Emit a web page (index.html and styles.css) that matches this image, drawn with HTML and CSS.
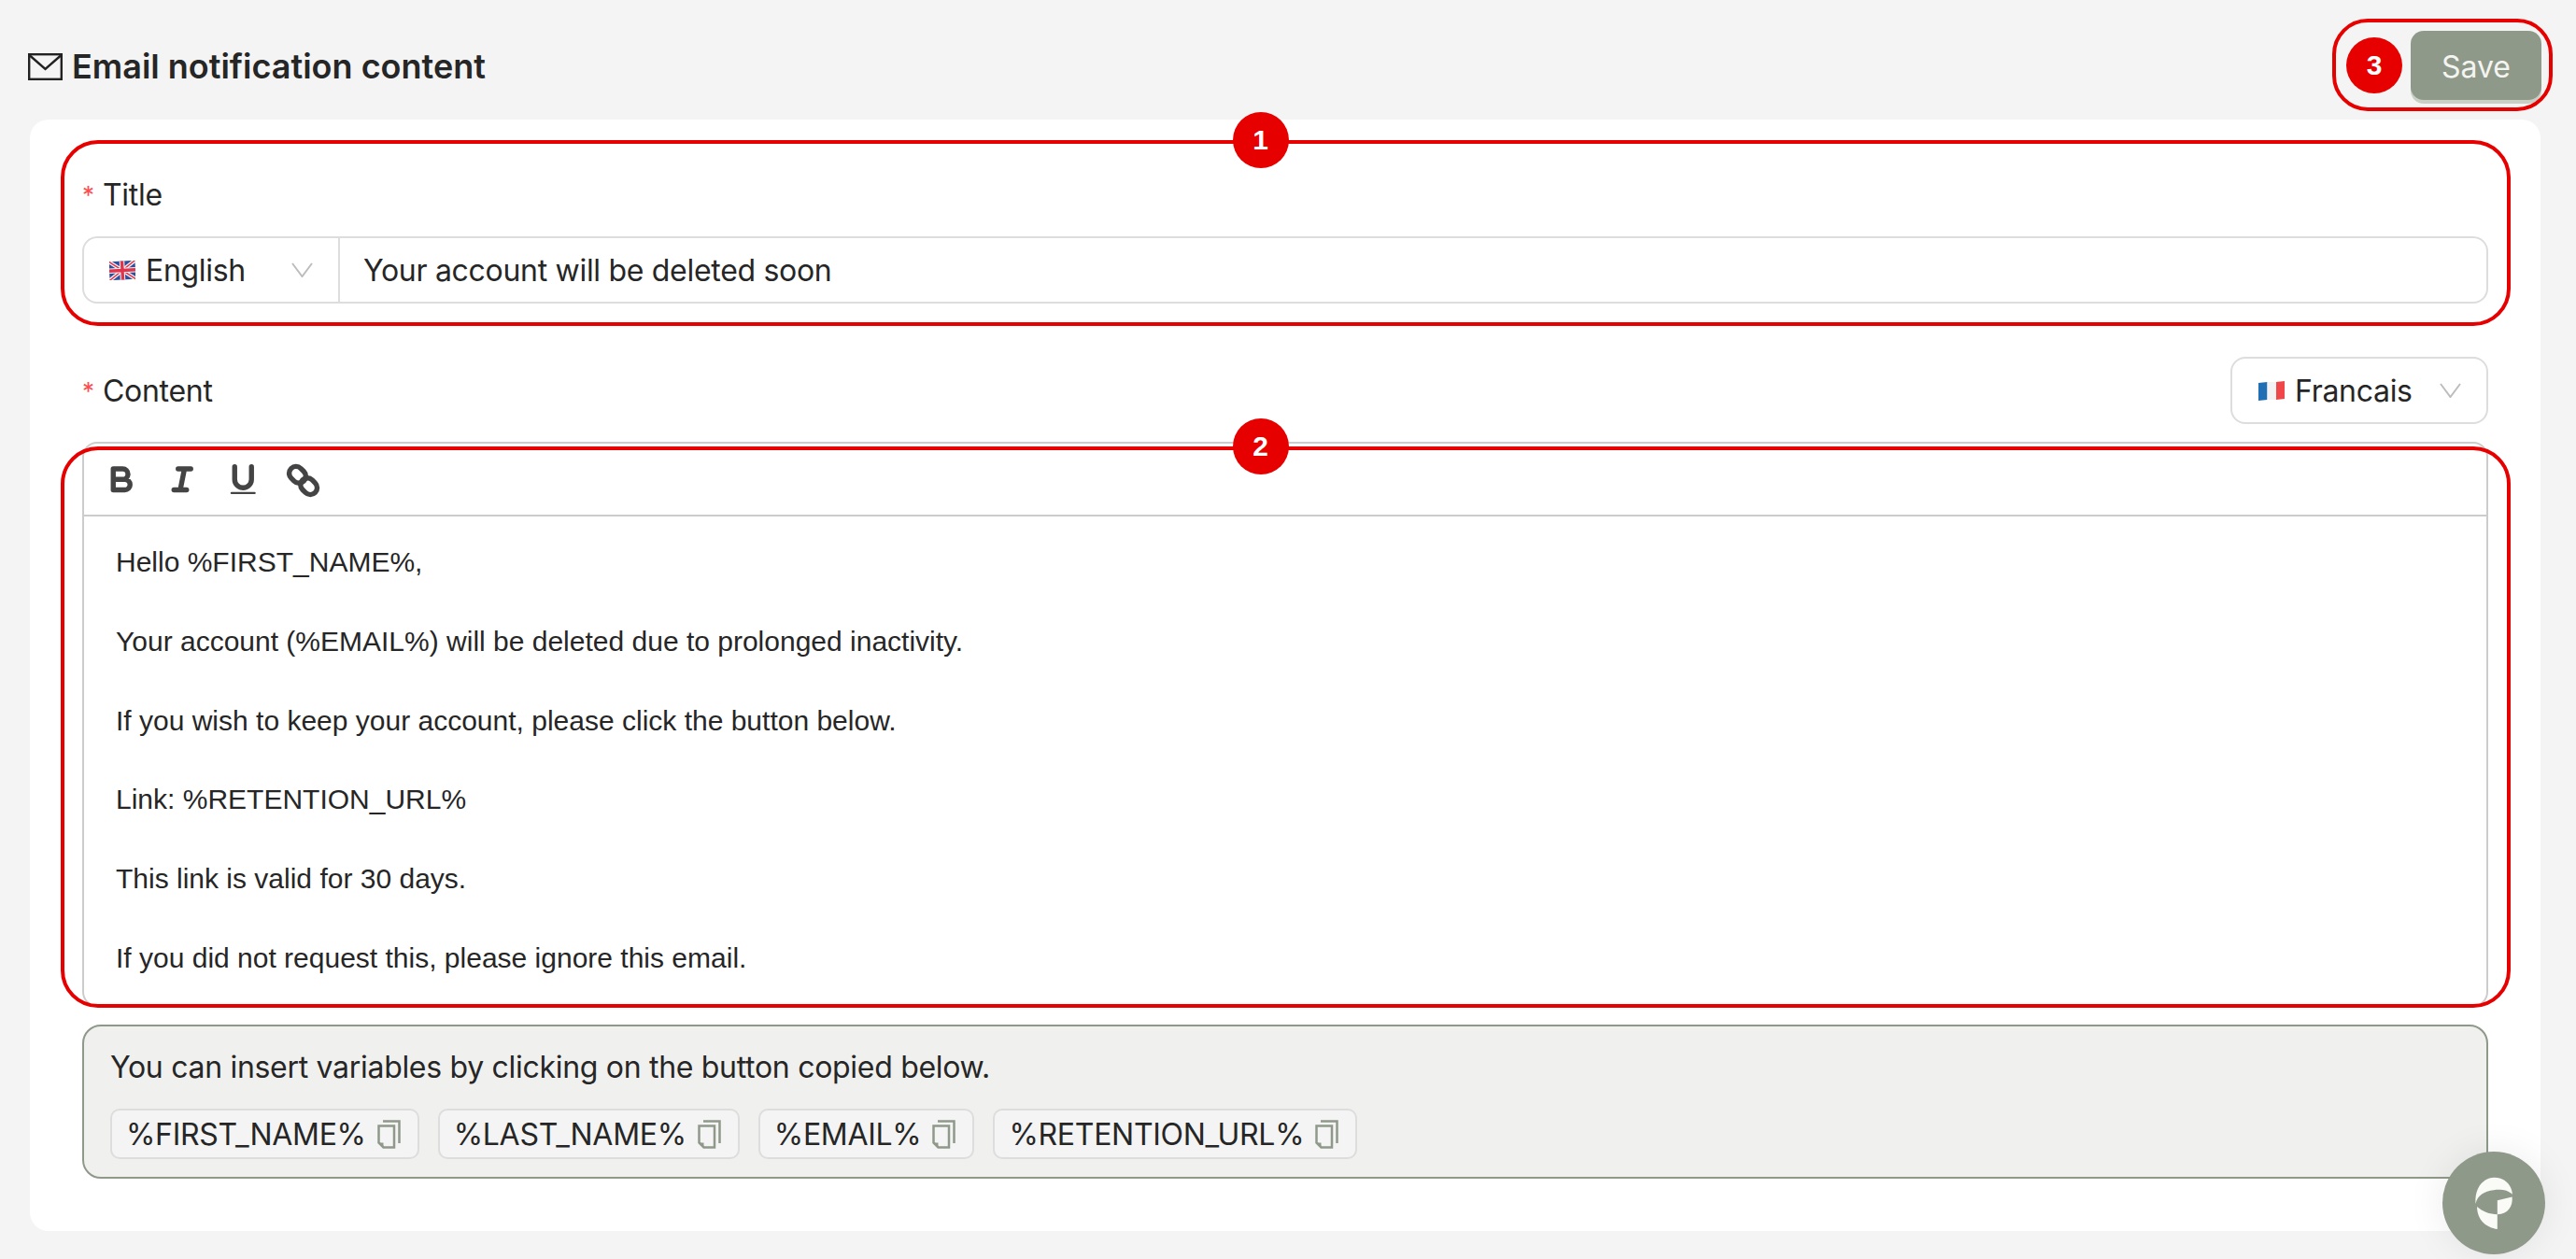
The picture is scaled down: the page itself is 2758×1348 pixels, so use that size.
FILE: index.html
```html
<!DOCTYPE html>
<html lang="en">
<head>
<meta charset="utf-8">
<title>Email notification content</title>
<link rel="stylesheet" href="styles.css">
</head>
<body>
<div class="page">
  <header class="topbar">
    <h1 class="heading">
      <svg class="mail-icon" viewBox="0 0 37 29" aria-hidden="true"><rect x="1.2" y="1.2" width="34.6" height="26.6" fill="none" stroke="#222" stroke-width="2.4"/><path d="M2 2.500 18.500 17 35 2.500" fill="none" stroke="#222" stroke-width="2.400"/></svg>
      <span>Email notification content</span>
    </h1>
    <div class="save-wrap">
      <span class="badge">3</span>
      <button class="save">Save</button>
      <span class="hl hl-save"></span>
    </div>
  </header>

  <main class="card">
    <section class="title-field">
      <div class="label"><span class="req">*</span>Title</div>
      <div class="input-group">
        <div class="lang lang-en">
          <svg class="flag" viewBox="0 0 28 21" aria-hidden="true"><g transform="rotate(-3 14 10.500)"><rect y=".5" width="28" height="20" rx="1.500" fill="#2f4f9e"/><path d="M0 .5 28 20.500M28 .5 0 20.500" stroke="#f2f2f2" stroke-width="4"/><path d="M0 .5 28 20.500M28 .5 0 20.500" stroke="#e0344c" stroke-width="1.500"/><path d="M14 .5V20.500M0 10.500H28" stroke="#f2f2f2" stroke-width="5.500"/><path d="M14 .5V20.500M0 10.500H28" stroke="#e0344c" stroke-width="3.400"/></g></svg>
          <span class="lang-name">English</span>
          <svg class="chev" viewBox="0 0 23 16" aria-hidden="true"><path d="M1 1 11.500 15 22 1" fill="none" stroke="#bdbdbd" stroke-width="2"/></svg>
        </div>
        <div class="input-value">Your account will be deleted soon</div>
      </div>
      <span class="hl hl-title"><span class="badge badge-top">1</span></span>
    </section>

    <section class="content-head">
      <div class="label"><span class="req">*</span>Content</div>
      <div class="lang lang-fr">
        <svg class="flag" viewBox="0 0 28 21" aria-hidden="true"><path d="M0 2 9.500 1V20L0 21Z" fill="#1f6fb5"/><path d="M9.500 1H19V20H9.500Z" fill="#f3f3f3"/><path d="M19 1 28 0V19L19 20Z" fill="#f0474a"/></svg>
        <span class="lang-name">Francais</span>
        <svg class="chev" viewBox="0 0 23 16" aria-hidden="true"><path d="M1 1 11.500 15 22 1" fill="none" stroke="#bdbdbd" stroke-width="2"/></svg>
      </div>
    </section>

    <section class="editor">
      <div class="toolbar">
        <svg class="tool" viewBox="0 0 18 18" aria-hidden="true"><path class="tool-stroke" d="M5 4H9.500A2.500 2.500 0 0 1 12 6.500 2.500 2.500 0 0 1 9.500 9H5ZM5 9H10.500A2.500 2.500 0 0 1 13 11.500 2.500 2.500 0 0 1 10.500 14H5Z"/></svg>
        <svg class="tool" viewBox="0 0 18 18" aria-hidden="true"><path class="tool-stroke" d="M7 4H13M5 14H11M8 14 10 4"/></svg>
        <svg class="tool" viewBox="0 0 18 18" aria-hidden="true"><path class="tool-stroke" d="M5 3V9A4 4 0 0 0 9 13 4 4 0 0 0 13 9V3"/><rect x="3" y="15" width="12" height="1" rx=".5" fill="#444"/></svg>
        <svg class="tool" viewBox="0 0 18 18" aria-hidden="true"><rect class="tool-stroke" x="1.750" y="3.550" width="8.500" height="6.500" rx="3.250" transform="rotate(45 6 6.800)"/><rect class="tool-stroke" x="7.150" y="9.050" width="8.500" height="6.500" rx="3.250" transform="rotate(45 11.400 12.300)"/></svg>
      </div>
      <div class="editor-body">
        <p>Hello %FIRST_NAME%,</p>
        <p>Your account (%EMAIL%) will be deleted due to prolonged inactivity.</p>
        <p>If you wish to keep your account, please click the button below.</p>
        <p>Link: %RETENTION_URL%</p>
        <p>This link is valid for 30 days.</p>
        <p>If you did not request this, please ignore this email.</p>
      </div>
      <span class="hl hl-editor"><span class="badge badge-top">2</span></span>
    </section>

    <section class="vars">
      <p class="vars-text">You can insert variables by clicking on the button copied below.</p>
      <div class="chips">
        <button class="chip">%FIRST_NAME%<svg class="copy" viewBox="0 0 25 31" aria-hidden="true"><path class="copy-line" d="M1.500 6.500H18V29.500H6.500L1.500 24.500Z"/><path d="M1.500 24.500H6.500V29.500Z" fill="#8f998a"/><path class="copy-line" d="M6 1.500H23.500V25"/></svg></button>
        <button class="chip">%LAST_NAME%<svg class="copy" viewBox="0 0 25 31" aria-hidden="true"><path class="copy-line" d="M1.500 6.500H18V29.500H6.500L1.500 24.500Z"/><path d="M1.500 24.500H6.500V29.500Z" fill="#8f998a"/><path class="copy-line" d="M6 1.500H23.500V25"/></svg></button>
        <button class="chip">%EMAIL%<svg class="copy" viewBox="0 0 25 31" aria-hidden="true"><path class="copy-line" d="M1.500 6.500H18V29.500H6.500L1.500 24.500Z"/><path d="M1.500 24.500H6.500V29.500Z" fill="#8f998a"/><path class="copy-line" d="M6 1.500H23.500V25"/></svg></button>
        <button class="chip">%RETENTION_URL%<svg class="copy" viewBox="0 0 25 31" aria-hidden="true"><path class="copy-line" d="M1.500 6.500H18V29.500H6.500L1.500 24.500Z"/><path d="M1.500 24.500H6.500V29.500Z" fill="#8f998a"/><path class="copy-line" d="M6 1.500H23.500V25"/></svg></button>
      </div>
    </section>
  </main>

  <button class="fab" aria-label="Support">
    <svg viewBox="0 0 124 170" class="fab-logo" aria-hidden="true"><path d="M1 72C3 30 30 2 62 2C95 2 118 24 121 57C105 42 82 40 60 43C30 47 8 58 1 88Z" fill="#fafaf7"/><path d="M72 77 120 65C123 95 108 120 72 122Z" fill="#fafaf7"/><path d="M6 97C24 113 46 121 72 122V170C36 165 6 140 6 97Z" fill="#fafaf7"/></svg>
  </button>
</div>
</body>
</html>
```

FILE: styles.css
```css
* { box-sizing: border-box; }
html, body { margin: 0; height: 100%; }
body {
  background: #f4f4f4;
  color: #262626;
  font-family: Inter, "Liberation Sans", sans-serif;
  letter-spacing: -0.3px;
  overflow: hidden;
}
.page { position: relative; min-height: 1348px; padding-left: 32px; padding-right: 38px; }
.topbar {
  height: 128px;
  display: flex;
  justify-content: space-between;
  align-items: flex-start;
  padding-top: 33px;
  margin-right: -1px;
}
.heading {
  margin: 4px 0 0 -2px;
  display: flex;
  align-items: center;
  gap: 10px;
  font-size: 36px;
  line-height: 68px;
  font-weight: 600;
  letter-spacing: 0;
}
.mail-icon { width: 37px; height: 29px; }
.save-wrap { position: relative; display: flex; align-items: center; gap: 9px; }
.save {
  width: 140px;
  height: 74px;
  border: 0;
  border-radius: 14px;
  padding: 2px 0 0;
  background: #8f998a;
  box-shadow: 0 4px 0 #c9cfc5;
  color: #f4f4f0;
  font: 400 32px Inter, sans-serif;
}
.hl {
  position: absolute;
  border: 4px solid #e60000;
  pointer-events: none;
}
.hl-save { left: -15px; right: -12px; top: -13px; bottom: -12px; border-radius: 38px; }
.hl-title { left: -23px; right: -24px; top: -38px; bottom: -24px; border-radius: 40px; }
.hl-editor { left: -25px; right: -26px; top: 3px; bottom: -3px; border-radius: 40px; }
.badge {
  width: 60px;
  height: 60px;
  border-radius: 50%;
  background: #e60000;
  color: #fff;
  display: flex;
  align-items: center;
  justify-content: center;
  font: 700 30px "Liberation Sans", sans-serif;
}
.badge-top { position: absolute; left: 50%; top: -34px; margin-left: -57px; }
.card {
  background: #fff;
  border-radius: 20px;
  height: 1190px;
  padding: 60px 56px 56px;
}
.title-field { position: relative; }
.label { font-size: 32px; line-height: 42px; height: 40px; display: flex; }
.req { color: #ff4d4f; width: 22px; font-size: 26px; }
.input-group {
  margin-top: 25px;
  height: 72px;
  border: 2px solid #ddd;
  border-radius: 16px;
  display: flex;
  align-items: center;
  font-size: 32px;
}
.lang { display: flex; align-items: center; font-size: 32px; }
.lang-en { width: 274px; height: 100%; border-right: 2px solid #ddd; padding-left: 27px; }
.flag { width: 28px; height: 21px; margin-right: 11px; flex: none; }
.lang-name { flex: 1; }
.chev { width: 23px; height: 16px; flex: none; margin-right: 27px; }
.input-value { padding-left: 25px; }
.content-head {
  margin-top: 57px;
  height: 72px;
  display: flex;
  justify-content: space-between;
  align-items: center;
}
.lang-fr {
  width: 276px;
  height: 72px;
  border: 2px solid #ddd;
  border-radius: 16px;
  padding-left: 28px;
}
.editor {
  position: relative;
  margin-top: 19px;
  height: 605px;
  border: 2px solid #ccc;
  border-radius: 16px;
  font-family: "Liberation Sans", Arial, sans-serif;
  letter-spacing: 0;
}
.toolbar {
  height: 78px;
  border-bottom: 2px solid #ccc;
  display: flex;
  gap: 24.5px;
  padding: 18px 20px 0;
}
.tool { width: 40.5px; height: 40.5px; }
.tool-stroke { fill: none; stroke: #444; stroke-width: 2.4; stroke-linecap: round; stroke-linejoin: round; }
.editor-body { padding: 28px 34px; font-size: 30px; line-height: 42.4px; color: #262626; }
.editor-body p { margin: 0 0 42.4px; }
.vars {
  margin-top: 19px;
  height: 165px;
  border: 2px solid #8f998a;
  border-radius: 20px;
  background: #f0f0ee;
  padding: 24px 28px 0;
}
.vars-text { margin: 0; font-size: 32px; line-height: 40px; }
.chips { display: flex; gap: 20px; margin-top: 24px; }
.chip {
  height: 54px;
  border: 2px solid #ddd;
  border-radius: 10px;
  background: #f4f4f4;
  color: #262626;
  padding: 0 18px 0 15px;
  display: flex;
  align-items: center;
  gap: 12px;
  font: 400 32px Inter, sans-serif;
  letter-spacing: -0.3px;
}
.copy { width: 25px; height: 31px; }
.copy-line { fill: none; stroke: #8f998a; stroke-width: 2.5; }
.fab {
  position: absolute;
  left: 2615px;
  top: 1233px;
  width: 110px;
  height: 110px;
  padding: 0;
  border: 0;
  border-radius: 50%;
  background: #8f998a;
  box-shadow: 0 0 40px rgba(0,0,0,.08);
  display: flex;
  align-items: center;
  justify-content: center;
}
.fab-logo { width: 41px; height: 56px; margin-top: -1px; }
```
